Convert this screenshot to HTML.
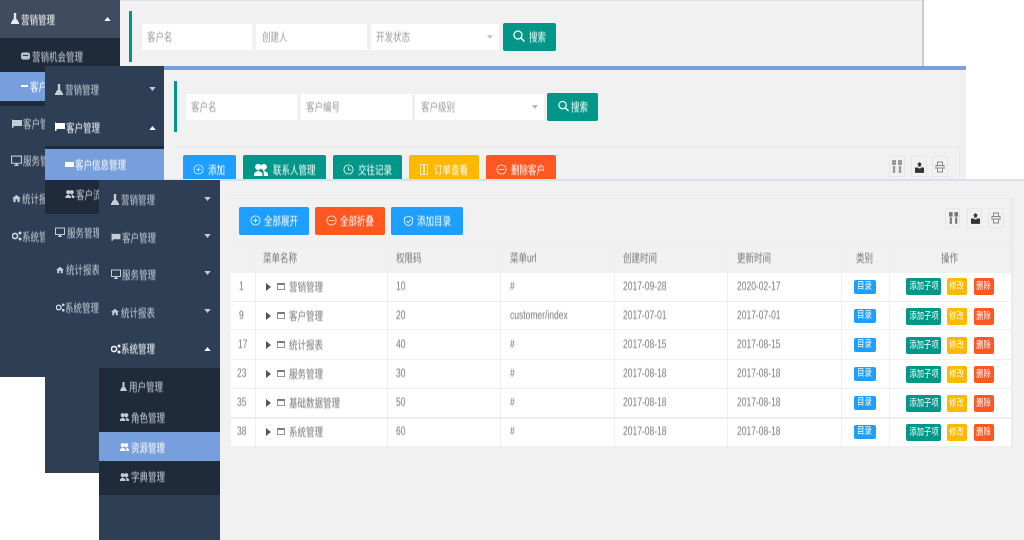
<!DOCTYPE html>
<html lang="zh"><head><meta charset="utf-8"><title>管理系统</title>
<style>
html,body{margin:0;padding:0;background:#fff}
#p{position:relative;width:1024px;height:540px;overflow:hidden;background:#fff;font-family:"Liberation Sans","Noto Sans CJK SC",sans-serif;font-size:11.5px;filter:blur(.3px)}
#p div,#p svg{position:absolute}
.b,.cell{white-space:nowrap;line-height:14px;margin-top:2px;transform:scaleX(.74);transform-origin:0 50%;filter:blur(.4px)}
.n{color:#c8d0da}
.w{color:#fff}
.g{color:#9a9a9a}
.i{background:#fff}
.btn{border-radius:2px}
.t{background:#009688}.o{background:#ffb800}.r{background:#ff5722}.u{background:#1e9fff}
.tool{border:1px solid #e6e6e6;box-sizing:border-box}
.cell{color:#777}
.tag{color:#fff;border-radius:2px;font-size:9.5px;height:14px;line-height:14px;white-space:nowrap;display:flex;justify-content:center;filter:blur(.25px)}
.tag span{display:block;flex:none;transform:scaleX(.77)}
.a{height:17px;line-height:17px}
.ln{background:#efefef}
</style></head><body><div id="p">
<svg width="0" height="0" style="left:0;top:0"><defs>
<symbol id="c" viewBox="0 0 8 5"><path d="M0 0h8L4 5z" fill="currentColor"/></symbol>
<symbol id="cu" viewBox="0 0 8 5"><path d="M0 5h8L4 0z" fill="currentColor"/></symbol>
<symbol id="pe" viewBox="0 0 8 11"><path d="M2.800 0h2.400v6l1.800 1.500V9h1v2H0V9h1V7.500L2.800 6z" fill="currentColor"/></symbol>
<symbol id="fl" viewBox="0 0 10 9"><path d="M0 0l1 1h9v6H2L1 9H0z" fill="currentColor"/></symbol>
<symbol id="mo" viewBox="0 0 10 10"><path d="M0 .5h10v7.500H6v1h1v1H3V9h1V8H0zm1 1v5.500h8V1.500z" fill="currentColor"/></symbol>
<symbol id="ho" viewBox="0 0 10 10"><path d="M5 1l5 4H8.500v4H6V6H4v3H1.500V5H0z" fill="currentColor"/></symbol>
<symbol id="sh" viewBox="0 0 10 10"><circle cx="3" cy="5" r="2.600" fill="none" stroke="currentColor" stroke-width="1.600"/><circle cx="8" cy="2" r="1.500" fill="currentColor"/><circle cx="8" cy="8" r="1.500" fill="currentColor"/></symbol>
<symbol id="gr" viewBox="0 0 10 10"><circle cx="3" cy="3.500" r="2.200" fill="currentColor"/><circle cx="7" cy="3.500" r="2.200" fill="currentColor"/><path d="M0 10V8l3-2 3 2v2zM6.500 5.500L10 8v2H7V8z" fill="currentColor"/></symbol>
<symbol id="bl" viewBox="0 0 10 8"><rect width="10" height="8" rx="2.500" fill="currentColor"/><rect x="2" y="3" width="6" height="1" fill="#1f2b3a"/></symbol>
<symbol id="pl" viewBox="0 0 12 12"><circle cx="6" cy="6" r="5" fill="none" stroke="currentColor"/><path d="M6 3.500v5M3.500 6h5" stroke="currentColor"/></symbol>
<symbol id="mi" viewBox="0 0 12 12"><circle cx="6" cy="6" r="5" fill="none" stroke="currentColor"/><path d="M3 6h6" stroke="currentColor"/></symbol>
<symbol id="cl" viewBox="0 0 12 12"><circle cx="6" cy="6" r="5" fill="none" stroke="currentColor"/><path d="M6 3v3.500h3" fill="none" stroke="currentColor"/></symbol>
<symbol id="se" viewBox="0 0 12 12"><circle cx="5" cy="5" r="4" fill="none" stroke="currentColor" stroke-width="1.300"/><path d="M8 8l3.500 3.500" stroke="currentColor" stroke-width="1.500"/></symbol>
<symbol id="sh2" viewBox="0 0 12 12"><path d="M6 .8l4.500 1.700v4c0 2.500-2.500 4-4.500 4.700C4 10.500 1.500 9 1.500 6.500v-4z" fill="none" stroke="currentColor"/><path d="M3.800 6l1.800 1.800L8.500 4.500" fill="none" stroke="currentColor"/></symbol>
<symbol id="do" viewBox="0 0 8 11"><path d="M.5.500h3v10h-3zM4.500.500h3v10h-3z" fill="none" stroke="currentColor"/></symbol>
<symbol id="ar" viewBox="0 0 5 8"><path d="M0 0l5 4-5 4z" fill="currentColor"/></symbol>
<symbol id="wi" viewBox="0 0 10 9"><path d="M.5.500h9v8h-9z" fill="none" stroke="currentColor"/><path d="M.5 0h9v2.500h-9z" fill="currentColor"/></symbol>
<symbol id="co" viewBox="0 0 10 13"><path d="M0 0h4v5H0zM6 0h4v5H6zM.8 6h2.400v7H.8zM6.800 6h2.400v7H6.800z" fill="currentColor"/></symbol>
<symbol id="ex" viewBox="0 0 10 12"><path d="M3.500 5V2.500H2L5 0l3 2.500H6.500V5zM0 6h3l1 1h2l1-1h3v6H0z" fill="currentColor"/></symbol>
<symbol id="pr" viewBox="0 0 10 12"><path d="M2.500 4V1h5v3M1 8V4.500h8V8M2.500 7h5v4h-5z" fill="none" stroke="currentColor"/></symbol>
</defs></svg>

<!-- Window 1 -->
<div style="left:0;top:0;width:924px;height:66px;background:#f1f1f1"></div>
<div style="left:0;top:0;width:924px;height:1px;background:#dfe4ee"></div>
<div style="left:922px;top:0;width:2px;height:66px;background:#cacaca"></div>
<div style="left:0;top:0;width:120px;height:377px;background:#2d3e55"></div>
<div style="left:0;top:0;width:120px;height:38px;background:#3f4b5e"></div>
<div style="left:0;top:38px;width:120px;height:68px;background:#1f2b3a"></div>
<div style="left:0;top:72px;width:120px;height:29px;background:#769fdc"></div>
<svg width="8" height="11" style="left:11px;top:13px;color:#e8e8e8"><use href="#pe"/></svg>
<div class="b w" style="left:21px;top:12px">营销管理</div>
<svg width="7" height="4" style="left:104px;top:17px;color:#fff"><use href="#cu"/></svg>
<svg width="9" height="8" style="left:21px;top:52px;color:#b8c0ca"><use href="#bl"/></svg>
<div class="b n" style="left:32px;top:49px">营销机会管理</div>
<div style="left:21px;top:85px;width:7px;height:2px;background:#fff"></div>
<div class="b w" style="left:30px;top:79px">客户开发计划</div>
<svg width="10" height="9" style="left:12px;top:119px;color:#c4ccd6"><use href="#fl"/></svg>
<div class="b n" style="left:23px;top:116px">客户管理</div>
<svg width="11" height="11" style="left:11px;top:155px;color:#c4ccd6"><use href="#mo"/></svg>
<div class="b n" style="left:23px;top:153px">服务管理</div>
<svg width="9" height="9" style="left:12px;top:194px;color:#c4ccd6"><use href="#ho"/></svg>
<div class="b n" style="left:22px;top:191px">统计报表</div>
<svg width="10" height="10" style="left:12px;top:231px;color:#d4dae2"><use href="#sh"/></svg>
<div class="b n" style="left:22px;top:229px">系统管理</div>
<div style="left:129px;top:11px;width:3px;height:51px;background:#009688"></div>
<div class="i" style="left:142px;top:24px;width:110px;height:26px"></div>
<div class="b g" style="left:147px;top:29px">客户名</div>
<div class="i" style="left:256px;top:24px;width:111px;height:26px"></div>
<div class="b g" style="left:262px;top:29px">创建人</div>
<div class="i" style="left:371px;top:24px;width:128px;height:26px"></div>
<div class="b g" style="left:376px;top:29px">开发状态</div>
<svg width="6" height="4" style="left:487px;top:35px;color:#c2c2c2"><use href="#c"/></svg>
<div class="btn t" style="left:503px;top:23px;width:53px;height:28px"></div>
<div class="b w" style="left:529px;top:29px">搜索</div>
<svg width="12" height="12" style="left:513px;top:30px;color:#fff"><use href="#se"/></svg>

<!-- Window 2 -->
<div style="left:45px;top:66px;width:921px;height:114px;background:#f1f1f1"></div>
<div style="left:45px;top:66px;width:921px;height:4px;background:#769fdc"></div>
<div style="left:45px;top:66px;width:119px;height:407px;background:#2d3e55"></div>
<div style="left:45px;top:146px;width:119px;height:68px;background:#1f2b3a"></div>
<div style="left:45px;top:149px;width:119px;height:31px;background:#769fdc"></div>
<svg width="8" height="11" style="left:55px;top:84px;color:#c4ccd6"><use href="#pe"/></svg>
<div class="b n" style="left:65px;top:82px">营销管理</div>
<svg width="7" height="4" style="left:149px;top:87px;color:#c4ccd6"><use href="#c"/></svg>
<svg width="10" height="9" style="left:55px;top:122px;color:#fff"><use href="#fl"/></svg>
<div class="b w" style="left:66px;top:120px">客户管理</div>
<svg width="7" height="4" style="left:149px;top:126px;color:#fff"><use href="#cu"/></svg>
<div style="left:65px;top:162px;width:9px;height:5px;background:#fff"></div>
<div class="b w" style="left:75px;top:157px">客户信息管理</div>
<svg width="10" height="9" style="left:65px;top:189px;color:#c4ccd6"><use href="#gr"/></svg>
<div class="b n" style="left:76px;top:187px">客户流失管理</div>
<svg width="10" height="10" style="left:55px;top:227px;color:#c4ccd6"><use href="#mo"/></svg>
<div class="b n" style="left:67px;top:225px">服务管理</div>
<svg width="8" height="8" style="left:56px;top:266px;color:#c4ccd6"><use href="#ho"/></svg>
<div class="b n" style="left:66px;top:262px">统计报表</div>
<svg width="9" height="9" style="left:56px;top:303px;color:#d4dae2"><use href="#sh"/></svg>
<div class="b n" style="left:65px;top:300px">系统管理</div>
<div style="left:174px;top:81px;width:3px;height:51px;background:#009688"></div>
<div class="i" style="left:186px;top:94px;width:111px;height:26px"></div>
<div class="b g" style="left:191px;top:99px">客户名</div>
<div class="i" style="left:301px;top:94px;width:111px;height:26px"></div>
<div class="b g" style="left:306px;top:99px">客户编号</div>
<div class="i" style="left:415px;top:94px;width:129px;height:26px"></div>
<div class="b g" style="left:421px;top:99px">客户级别</div>
<svg width="6" height="4" style="left:532px;top:105px;color:#b0b0b0"><use href="#c"/></svg>
<div class="btn t" style="left:547px;top:93px;width:51px;height:28px"></div>
<div class="b w" style="left:571px;top:99px">搜索</div>
<svg width="11" height="12" style="left:558px;top:100px;color:#fff"><use href="#se"/></svg>
<div style="left:175px;top:147px;width:784px;height:1px;background:#e8e8e8"></div>
<div style="left:959px;top:147px;width:1px;height:33px;background:#e8e8e8"></div>
<div class="btn u" style="left:183px;top:155px;width:53px;height:27px"></div>
<div class="b w" style="left:208px;top:162px">添加</div>
<svg width="11" height="11" style="left:193px;top:164px;color:#bfe3ff"><use href="#pl"/></svg>
<div class="btn t" style="left:243px;top:155px;width:83px;height:27px"></div>
<div class="b w" style="left:273px;top:162px">联系人管理</div>
<svg width="14" height="14" style="left:254px;top:162px;color:#fff"><use href="#gr"/></svg>
<div class="btn t" style="left:333px;top:155px;width:69px;height:27px"></div>
<div class="b w" style="left:358px;top:162px">交往记录</div>
<svg width="11" height="11" style="left:343px;top:164px;color:#d8f0ed"><use href="#cl"/></svg>
<div class="btn o" style="left:409px;top:155px;width:70px;height:27px"></div>
<div class="b w" style="left:434px;top:162px">订单查看</div>
<svg width="8" height="11" style="left:420px;top:164px;color:#ffe9a8"><use href="#do"/></svg>
<div class="btn r" style="left:486px;top:155px;width:70px;height:27px"></div>
<div class="b w" style="left:511px;top:162px">删除客户</div>
<svg width="11" height="11" style="left:496px;top:164px;color:#ffe0d6"><use href="#mi"/></svg>
<div class="tool" style="left:889px;top:156px;width:16px;height:21px"></div>
<svg width="10" height="13" style="left:892px;top:160px;color:#999"><use href="#co"/></svg>
<div class="tool" style="left:911px;top:156px;width:16px;height:21px"></div>
<svg width="9" height="11" style="left:915px;top:162px;color:#333"><use href="#ex"/></svg>
<div class="tool" style="left:932px;top:156px;width:16px;height:21px"></div>
<svg width="10" height="12" style="left:935px;top:161px;color:#888"><use href="#pr"/></svg>

<!-- Window 3 -->
<div style="left:220px;top:180px;width:804px;height:360px;background:#f1f1f1"></div>
<div style="left:164px;top:179px;width:860px;height:2px;background:#d5dfee"></div>
<div style="left:99px;top:180px;width:121px;height:360px;background:#2d3e55"></div>
<div style="left:99px;top:368px;width:121px;height:127px;background:#1f2b3a"></div>
<div style="left:99px;top:432px;width:121px;height:29px;background:#769fdc"></div>
<svg width="8" height="11" style="left:111px;top:194px;color:#c4ccd6"><use href="#pe"/></svg>
<div class="b n" style="left:121px;top:192px">营销管理</div>
<svg width="7" height="4" style="left:204px;top:197px;color:#c4ccd6"><use href="#c"/></svg>
<svg width="10" height="8" style="left:111px;top:233px;color:#c4ccd6"><use href="#fl"/></svg>
<div class="b n" style="left:122px;top:230px">客户管理</div>
<svg width="7" height="4" style="left:204px;top:234px;color:#c4ccd6"><use href="#c"/></svg>
<svg width="10" height="10" style="left:111px;top:269px;color:#c4ccd6"><use href="#mo"/></svg>
<div class="b n" style="left:122px;top:267px">服务管理</div>
<svg width="7" height="4" style="left:204px;top:271px;color:#c4ccd6"><use href="#c"/></svg>
<svg width="8" height="8" style="left:111px;top:308px;color:#c4ccd6"><use href="#ho"/></svg>
<div class="b n" style="left:121px;top:305px">统计报表</div>
<svg width="7" height="4" style="left:204px;top:309px;color:#c4ccd6"><use href="#c"/></svg>
<svg width="10" height="10" style="left:111px;top:344px;color:#eef0f3"><use href="#sh"/></svg>
<div class="b w" style="left:121px;top:341px">系统管理</div>
<svg width="7" height="4" style="left:204px;top:347px;color:#fff"><use href="#cu"/></svg>
<svg width="7" height="9" style="left:120px;top:382px;color:#c4ccd6"><use href="#pe"/></svg>
<div class="b n" style="left:129px;top:379px">用户管理</div>
<svg width="9" height="9" style="left:120px;top:412px;color:#c4ccd6"><use href="#gr"/></svg>
<div class="b n" style="left:131px;top:410px">角色管理</div>
<svg width="9" height="9" style="left:120px;top:442px;color:#fff"><use href="#gr"/></svg>
<div class="b w" style="left:131px;top:440px">资源管理</div>
<svg width="9" height="9" style="left:120px;top:472px;color:#c4ccd6"><use href="#gr"/></svg>
<div class="b n" style="left:131px;top:469px">字典管理</div>

<!-- Panel -->
<div style="left:230px;top:198px;width:783px;height:1px;background:#ebebeb"></div>
<div style="left:1010px;top:198px;width:3px;height:250px;background:#ebebeb"></div>
<div class="btn u" style="left:239px;top:207px;width:70px;height:28px"></div>
<div class="b w" style="left:264px;top:213px">全部展开</div>
<svg width="11" height="11" style="left:250px;top:215px;color:#d8efff"><use href="#pl"/></svg>
<div class="btn r" style="left:315px;top:207px;width:70px;height:28px"></div>
<div class="b w" style="left:340px;top:213px">全部折叠</div>
<svg width="11" height="11" style="left:326px;top:215px;color:#ffe0d6"><use href="#mi"/></svg>
<div class="btn u" style="left:391px;top:207px;width:72px;height:28px"></div>
<div class="b w" style="left:417px;top:213px">添加目录</div>
<svg width="11" height="12" style="left:403px;top:215px;color:#d8efff"><use href="#sh2"/></svg>
<div class="tool" style="left:945px;top:208px;width:15px;height:20px"></div>
<svg width="9" height="12" style="left:949px;top:212px;color:#777"><use href="#co"/></svg>
<div class="tool" style="left:967px;top:208px;width:15px;height:20px"></div>
<svg width="9" height="11" style="left:971px;top:213px;color:#333"><use href="#ex"/></svg>
<div class="tool" style="left:988px;top:208px;width:16px;height:20px"></div>
<svg width="10" height="12" style="left:991px;top:212px;color:#888"><use href="#pr"/></svg>

<!-- Table -->
<div style="left:231px;top:243px;width:780px;height:1px;background:#ebebeb"></div>
<div style="left:231px;top:273px;width:780px;height:174px;background:#fff"></div>
<div class="ln" style="left:231px;top:301px;width:780px;height:1px"></div>
<div class="ln" style="left:231px;top:329px;width:780px;height:1px"></div>
<div class="ln" style="left:231px;top:359px;width:780px;height:1px"></div>
<div class="ln" style="left:231px;top:388px;width:780px;height:1px"></div>
<div class="ln" style="left:231px;top:417px;width:780px;height:2px"></div>
<div class="ln" style="left:231px;top:446px;width:780px;height:2px"></div>
<div class="ln" style="left:255px;top:243px;width:1px;height:204px"></div>
<div class="ln" style="left:387px;top:243px;width:1px;height:204px"></div>
<div class="ln" style="left:500px;top:243px;width:1px;height:204px"></div>
<div class="ln" style="left:614px;top:243px;width:1px;height:204px"></div>
<div class="ln" style="left:727px;top:243px;width:1px;height:204px"></div>
<div class="ln" style="left:841px;top:243px;width:1px;height:204px"></div>
<div class="ln" style="left:889px;top:243px;width:1px;height:204px"></div>

<div class="cell" style="left:263px;top:250px">菜单名称</div>
<div class="cell" style="left:396px;top:250px">权限码</div>
<div class="cell" style="left:510px;top:250px">菜单url</div>
<div class="cell" style="left:623px;top:250px">创建时间</div>
<div class="cell" style="left:737px;top:250px">更新时间</div>
<div class="cell" style="left:856px;top:250px">类别</div>
<div class="cell" style="left:941px;top:250px">操作</div>

<!-- Row 1 -->
<div class="cell" style="left:239px;top:278px">1</div>
<svg width="5" height="8" style="left:266px;top:283px;color:#555"><use href="#ar"/></svg>
<svg width="8" height="7" style="left:277px;top:283px;color:#777"><use href="#wi"/></svg>
<div class="cell" style="left:289px;top:279px">营销管理</div>
<div class="cell" style="left:396px;top:278px">10</div>
<div class="cell" style="left:510px;top:278px">#</div>
<div class="cell" style="left:623px;top:278px">2017-09-28</div>
<div class="cell" style="left:737px;top:278px">2020-02-17</div>
<div class="tag u" style="left:854px;top:280px;width:22px"><span>目录</span></div>
<div class="tag t a" style="left:906px;top:278px;width:35px"><span>添加子项</span></div>
<div class="tag o a" style="left:947px;top:278px;width:20px"><span>修改</span></div>
<div class="tag r a" style="left:974px;top:278px;width:20px"><span>删除</span></div>

<!-- Row 2 -->
<div class="cell" style="left:239px;top:307px">9</div>
<svg width="5" height="8" style="left:266px;top:312px;color:#555"><use href="#ar"/></svg>
<svg width="8" height="7" style="left:277px;top:312px;color:#777"><use href="#wi"/></svg>
<div class="cell" style="left:289px;top:308px">客户管理</div>
<div class="cell" style="left:396px;top:307px">20</div>
<div class="cell" style="left:510px;top:307px">customer/index</div>
<div class="cell" style="left:623px;top:307px">2017-07-01</div>
<div class="cell" style="left:737px;top:307px">2017-07-01</div>
<div class="tag u" style="left:854px;top:309px;width:22px"><span>目录</span></div>
<div class="tag t a" style="left:906px;top:308px;width:35px"><span>添加子项</span></div>
<div class="tag o a" style="left:947px;top:308px;width:20px"><span>修改</span></div>
<div class="tag r a" style="left:974px;top:308px;width:20px"><span>删除</span></div>

<!-- Row 3 -->
<div class="cell" style="left:238px;top:336px">17</div>
<svg width="5" height="8" style="left:266px;top:341px;color:#555"><use href="#ar"/></svg>
<svg width="8" height="7" style="left:277px;top:341px;color:#777"><use href="#wi"/></svg>
<div class="cell" style="left:289px;top:337px">统计报表</div>
<div class="cell" style="left:396px;top:336px">40</div>
<div class="cell" style="left:510px;top:336px">#</div>
<div class="cell" style="left:623px;top:336px">2017-08-15</div>
<div class="cell" style="left:737px;top:336px">2017-08-15</div>
<div class="tag u" style="left:854px;top:338px;width:22px"><span>目录</span></div>
<div class="tag t a" style="left:906px;top:337px;width:35px"><span>添加子项</span></div>
<div class="tag o a" style="left:947px;top:337px;width:20px"><span>修改</span></div>
<div class="tag r a" style="left:974px;top:337px;width:20px"><span>删除</span></div>

<!-- Row 4 -->
<div class="cell" style="left:237px;top:365px">23</div>
<svg width="5" height="8" style="left:266px;top:370px;color:#555"><use href="#ar"/></svg>
<svg width="8" height="7" style="left:277px;top:370px;color:#777"><use href="#wi"/></svg>
<div class="cell" style="left:289px;top:366px">服务管理</div>
<div class="cell" style="left:396px;top:365px">30</div>
<div class="cell" style="left:510px;top:365px">#</div>
<div class="cell" style="left:623px;top:365px">2017-08-18</div>
<div class="cell" style="left:737px;top:365px">2017-08-18</div>
<div class="tag u" style="left:854px;top:367px;width:22px"><span>目录</span></div>
<div class="tag t a" style="left:906px;top:366px;width:35px"><span>添加子项</span></div>
<div class="tag o a" style="left:947px;top:366px;width:20px"><span>修改</span></div>
<div class="tag r a" style="left:974px;top:366px;width:20px"><span>删除</span></div>

<!-- Row 5 -->
<div class="cell" style="left:237px;top:394px">35</div>
<svg width="5" height="8" style="left:266px;top:399px;color:#555"><use href="#ar"/></svg>
<svg width="8" height="7" style="left:277px;top:399px;color:#777"><use href="#wi"/></svg>
<div class="cell" style="left:289px;top:395px">基础数据管理</div>
<div class="cell" style="left:396px;top:394px">50</div>
<div class="cell" style="left:510px;top:394px">#</div>
<div class="cell" style="left:623px;top:394px">2017-08-18</div>
<div class="cell" style="left:737px;top:394px">2017-08-18</div>
<div class="tag u" style="left:854px;top:396px;width:22px"><span>目录</span></div>
<div class="tag t a" style="left:906px;top:395px;width:35px"><span>添加子项</span></div>
<div class="tag o a" style="left:947px;top:395px;width:20px"><span>修改</span></div>
<div class="tag r a" style="left:974px;top:395px;width:20px"><span>删除</span></div>

<!-- Row 6 -->
<div class="cell" style="left:237px;top:423px">38</div>
<svg width="5" height="8" style="left:266px;top:428px;color:#555"><use href="#ar"/></svg>
<svg width="8" height="7" style="left:277px;top:428px;color:#777"><use href="#wi"/></svg>
<div class="cell" style="left:289px;top:424px">系统管理</div>
<div class="cell" style="left:396px;top:423px">60</div>
<div class="cell" style="left:510px;top:423px">#</div>
<div class="cell" style="left:623px;top:423px">2017-08-18</div>
<div class="cell" style="left:737px;top:423px">2017-08-18</div>
<div class="tag u" style="left:854px;top:425px;width:22px"><span>目录</span></div>
<div class="tag t a" style="left:906px;top:424px;width:35px"><span>添加子项</span></div>
<div class="tag o a" style="left:947px;top:424px;width:20px"><span>修改</span></div>
<div class="tag r a" style="left:974px;top:424px;width:20px"><span>删除</span></div>
</div></body></html>
